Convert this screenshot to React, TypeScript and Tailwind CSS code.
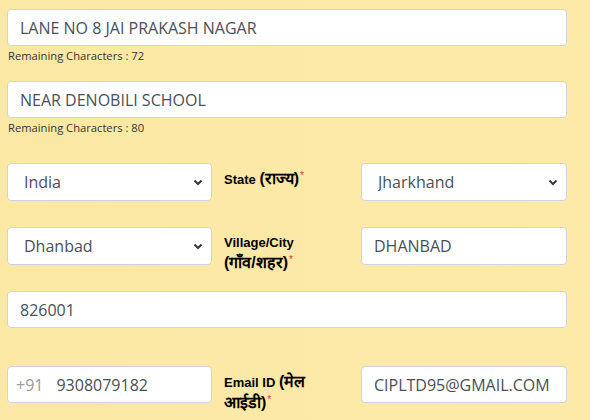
import React from "react";

const inputCls =
  "block w-full h-[37px] rounded-[4px] border border-[#ced4da] bg-white px-3 text-[16px] text-[#495057] outline-none";

const labelCls =
  "block h-[38px] max-w-[112px] pt-[6px] font-['Liberation_Sans',Arial,sans-serif] text-[13px] font-bold leading-[20px] text-black";

function Label({ en, hi, nowrap = true }: { en: string; hi: string; nowrap?: boolean }) {
  return (
    <label className={labelCls}>
      {en}{" "}
      <span className={nowrap ? "whitespace-nowrap text-[16px]" : "text-[16px]"}>{hi}</span>
      <sup className="ml-[1px] text-[10px] font-normal text-[#e5342f]">*</sup>
    </label>
  );
}

function Select({ value }: { value: string }) {
  return (
    <div className="relative">
      <select
        defaultValue={value}
        className="block w-full h-[38px] appearance-none rounded-[4px] border border-[#ced4da] bg-white pl-4 pr-8 text-[16px] text-[#495057] outline-none"
      >
        <option>{value}</option>
      </select>
      <svg
        className="pointer-events-none absolute right-[9px] top-[16px]"
        width="10"
        height="7"
        viewBox="0 0 10 7"
      >
        <path d="M1.5 1.5 L5 5 L8.5 1.5" fill="none" stroke="#343a40" strokeWidth="2" />
      </svg>
    </div>
  );
}

function Remaining({ n }: { n: number }) {
  return (
    <p className="mt-[2px] pl-[1px] text-[11.2px] leading-[16px] text-[#333]">
      Remaining Characters : {n}
    </p>
  );
}

export default function App() {
  return (
    <div className="h-[420px] w-[590px] overflow-hidden bg-gradient-to-r from-[#fce8a5] to-[#fdeaa9] px-[7px] pt-[9px] font-['Open_Sans','Noto_Sans',sans-serif]">
      <div className="w-[560px]">
        <input className={inputCls} defaultValue="LANE NO 8 JAI PRAKASH NAGAR" />
        <Remaining n={72} />

        <input className={`${inputCls} mt-[17px]`} defaultValue="NEAR DENOBILI SCHOOL" />
        <Remaining n={80} />

        <div className="mt-[27px] grid grid-cols-[205px_1fr_206px] gap-x-3 gap-y-[26px]">
          <Select value="India" />
          <Label en="State" hi="(राज्य)" />
          <Select value="Jharkhand" />

          <Select value="Dhanbad" />
          <Label en="Village/City" hi="(गाँव/शहर)" />
          <input className={`${inputCls} h-[38px]`} defaultValue="DHANBAD" />
        </div>

        <input className={`${inputCls} mt-[26px]`} defaultValue="826001" />

        <div className="mt-[38px] grid grid-cols-[205px_1fr_206px] gap-x-3">
          <div className="flex h-[37px] items-center rounded-[4px] border border-[#ced4da] bg-white">
            <span className="pl-2 pr-[13px] text-[16px] text-[#999]">+91</span>
            <input
              className="w-full bg-transparent text-[16px] text-[#495057] outline-none"
              defaultValue="9308079182"
            />
          </div>
          <Label en="Email ID" hi="(मेल आईडी)" nowrap={false} />
          <input className={inputCls} defaultValue="CIPLTD95@GMAIL.COM" />
        </div>
      </div>
    </div>
  );
}
